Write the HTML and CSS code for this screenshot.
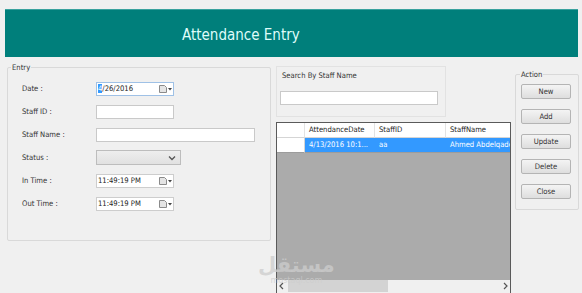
FILE: index.html
```html
<!DOCTYPE html>
<html lang="en">
<head>
  <meta charset="UTF-8">
  <title>Attendance Entry</title>
  <link rel="stylesheet" href="styles.css">
</head>
<body>
  <div class="header">
    <h1>Attendance Entry</h1>
  </div>

  <div class="main">
    <div class="group entry">
      <span class="group-title">Entry</span>

      <div class="form-row">
        <label>Date :</label>
        <div class="picker focused">
          <span class="picker-text"><span class="sel">4</span>/26/2016</span>
          <svg class="cal" width="14" height="10" viewBox="0 0 14 10">
            <path d="M1.5 1.5h5l2 2v5h-7z" fill="#e4e4e4" stroke="#8a8a8a"/>
            <path d="M10 4h4l-2 2.5z" fill="#444"/>
          </svg>
        </div>
      </div>

      <div class="form-row">
        <label>Staff ID :</label>
        <input class="textbox short" type="text">
      </div>

      <div class="form-row">
        <label>Staff Name :</label>
        <input class="textbox long" type="text">
      </div>

      <div class="form-row">
        <label>Status :</label>
        <div class="combo">
          <svg width="8" height="6" viewBox="0 0 8 6">
            <path d="M1 1.5l3 3 3-3" fill="none" stroke="#555" stroke-width="1.3"/>
          </svg>
        </div>
      </div>

      <div class="form-row">
        <label>In Time :</label>
        <div class="picker">
          <span class="picker-text">11:49:19 PM</span>
          <svg class="cal" width="14" height="10" viewBox="0 0 14 10">
            <path d="M1.5 1.5h5l2 2v5h-7z" fill="#e4e4e4" stroke="#8a8a8a"/>
            <path d="M10 4h4l-2 2.5z" fill="#444"/>
          </svg>
        </div>
      </div>

      <div class="form-row">
        <label>Out Time :</label>
        <div class="picker">
          <span class="picker-text">11:49:19 PM</span>
          <svg class="cal" width="14" height="10" viewBox="0 0 14 10">
            <path d="M1.5 1.5h5l2 2v5h-7z" fill="#e4e4e4" stroke="#8a8a8a"/>
            <path d="M10 4h4l-2 2.5z" fill="#444"/>
          </svg>
        </div>
      </div>
    </div>

    <div class="center">
      <div class="search-box">
        <div class="search-label">Search By Staff Name</div>
        <input class="textbox search-input" type="text">
      </div>

      <div class="grid">
        <div class="grid-row grid-head">
          <div class="cell rowhead"></div>
          <div class="cell">AttendanceDate</div>
          <div class="cell">StaffID</div>
          <div class="cell">StaffName</div>
        </div>
        <div class="grid-row selected">
          <div class="cell rowhead"></div>
          <div class="cell">4/13/2016 10:1...</div>
          <div class="cell">aa</div>
          <div class="cell">Ahmed Abdelqade</div>
        </div>
        <div class="grid-empty"></div>
        <div class="hscroll">
          <svg class="arrow" width="10" height="12" viewBox="0 0 10 12">
            <path d="M6 3l-3 3 3 3" fill="none" stroke="#555" stroke-width="1.2"/>
          </svg>
          <div class="track"><div class="thumb"></div></div>
          <svg class="arrow" width="10" height="12" viewBox="0 0 10 12">
            <path d="M4 3l3 3-3 3" fill="none" stroke="#555" stroke-width="1.2"/>
          </svg>
        </div>
      </div>
    </div>

    <div class="group action">
      <span class="group-title">Action</span>
      <button>New</button>
      <button>Add</button>
      <button>Update</button>
      <button>Delete</button>
      <button>Close</button>
    </div>
  </div>

  <div class="watermark">
    <span class="wm-ar">مستقل</span>
    <span class="wm-en">mostaql.com</span>
  </div>
</body>
</html>
```

FILE: styles.css
```css
* {
  box-sizing: border-box;
  margin: 0;
  padding: 0;
}

body {
  background-color: #f0f0f0;
  font-family: 'DejaVu Sans Condensed', 'DejaVu Sans', sans-serif;
  font-size: 7.6px;
  color: #222;
  width: 582px;
  height: 293px;
  overflow: hidden;
  position: relative;
}

.header {
  margin: 9px 4px 0 5px;
  height: 48px;
  background-color: #007f7b;
  border-top: 1px solid #3aa29e;
  display: flex;
  align-items: center;
  padding-left: 177px;
}

.header h1 {
  font-weight: normal;
  font-size: 15px;
  color: #dffcfa;
  margin-top: 3px;
}

.main {
  display: flex;
  align-items: flex-start;
  padding-left: 7px;
}

/* group boxes */
.group {
  border: 1px solid #d9d9d9;
  border-radius: 2px;
}

.group-title {
  display: block;
  width: fit-content;
  background-color: #f0f0f0;
  line-height: 11px;
  padding: 0 1px;
  margin-top: -6px;
  margin-left: 3px;
  color: #333;
}

.entry {
  width: 264px;
  height: 174px;
  margin-top: 10px;
}

.form-row {
  display: flex;
  align-items: center;
  height: 23px;
  padding-left: 14px;
}

.entry .group-title {
  margin-bottom: 4px;
}

.form-row label {
  width: 74px;
  color: #333;
}

.textbox {
  height: 14px;
  border: 1px solid #c9c9c9;
  background-color: #fff;
  outline: none;
}

.short {
  width: 78px;
}

.long {
  width: 159px;
}

.picker {
  width: 78px;
  height: 14px;
  border: 1px solid #cdcdcd;
  background-color: #fff;
  display: flex;
  align-items: center;
  justify-content: space-between;
  padding-left: 1px;
  padding-right: 1px;
}

.picker.focused {
  border-color: #9fc1e6;
}

.picker-text {
  color: #222;
}

.sel {
  background-color: #3399ff;
  color: #fff;
}

.cal {
  margin-top: 1px;
}

.combo {
  width: 85px;
  height: 15px;
  border: 1px solid #bdbdbd;
  background: linear-gradient(#eeeeee, #e1e1e1);
  display: flex;
  align-items: center;
  justify-content: flex-end;
  padding-right: 4px;
}

/* middle column */
.center {
  margin-left: 5px;
  width: 235px;
}

.search-box {
  margin-top: 9px;
  width: 170px;
  height: 51px;
  border: 1px solid #e2e2e2;
  padding: 3px 0 0 5px;
}

.search-label {
  color: #333;
  line-height: 11px;
}

.search-input {
  display: block;
  width: 158px;
  margin-top: 10px;
  margin-left: -2px;
}

.grid {
  margin-top: 5px;
  height: 176px;
  border: 1px solid #5a5a5a;
  background-color: #ababab;
  display: flex;
  flex-direction: column;
  overflow: hidden;
}

.grid-row {
  display: grid;
  grid-template-columns: 28px 70px 71px 1fr;
  height: 15px;
}

.cell {
  padding-left: 4px;
  line-height: 14px;
  white-space: nowrap;
  overflow: hidden;
}

.grid-head .cell {
  background-color: #fff;
  border-right: 1px solid #e3e3e3;
  border-bottom: 1px solid #d5d5d5;
  color: #222;
}

.grid-head .cell:last-child {
  border-right: none;
}

.selected .cell {
  background-color: #3399ff;
  color: #fff;
  border-bottom: 1px solid #9c9c9c;
}

.selected .rowhead {
  background-color: #fff;
  border-right: 1px solid #d5d5d5;
}

.grid-empty {
  flex: 1;
}

.hscroll {
  height: 17px;
  background-color: #f0f0f0;
  display: flex;
  align-items: flex-start;
}

.arrow {
  flex-shrink: 0;
}

.track {
  flex: 1;
  height: 12px;
  padding-left: 1px;
}

.thumb {
  width: 100px;
  height: 12px;
  background-color: #d3d3d3;
}

/* action box */
.action {
  width: 64px;
  height: 136px;
  margin-left: 4px;
  margin-top: 17px;
  display: flex;
  flex-direction: column;
  align-items: flex-start;
}

.action .group-title {
  margin-left: 4px;
  margin-bottom: 4px;
}

.action button {
  width: 50px;
  height: 15px;
  margin-left: 5px;
  margin-bottom: 10px;
  border: 1px solid #b4b4b4;
  border-radius: 2px;
  background: linear-gradient(#f4f4f4, #dedede);
  font-family: inherit;
  font-size: 7.6px;
  color: #333;
}

.watermark {
  position: absolute;
  left: 258px;
  top: 252px;
  display: flex;
  flex-direction: column;
  align-items: center;
  color: rgba(205, 205, 205, 0.75);
  pointer-events: none;
}

.wm-ar {
  font-family: 'DejaVu Sans', sans-serif;
  font-weight: bold;
  font-size: 21px;
  line-height: 26px;
}

.wm-en {
  font-family: 'DejaVu Sans', sans-serif;
  font-size: 8px;
  line-height: 9px;
  margin-top: -2px;
}
```
